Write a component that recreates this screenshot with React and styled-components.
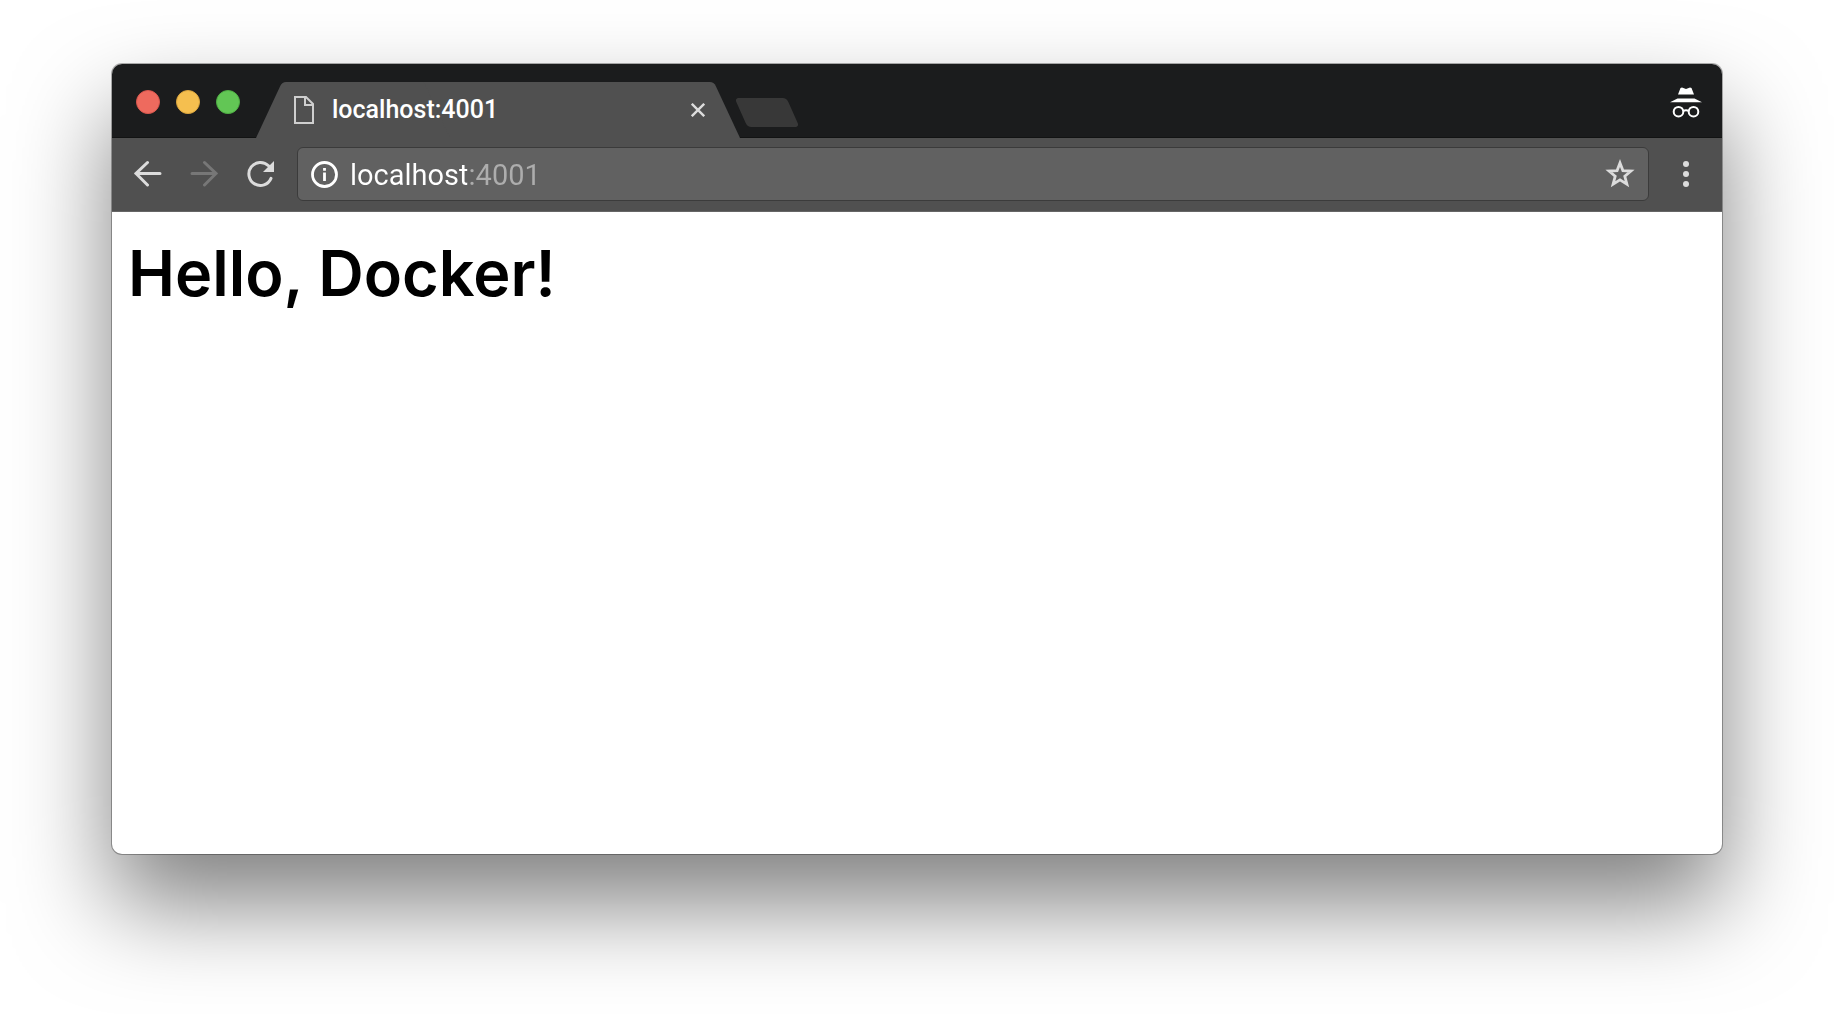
import React from "react";
import styled, { createGlobalStyle } from "styled-components";

const GlobalStyle = createGlobalStyle`
  *, *::before, *::after { box-sizing: border-box; }
  body {
    margin: 0;
    background: #fff;
    font-family: Roboto, "Liberation Sans", sans-serif;
  }
`;

const Desktop = styled.div`
  display: flex;
  min-height: 100vh;
  padding: 64px 112px 160px;
  overflow: hidden;
`;

const BrowserWindow = styled.div`
  flex: 1;
  min-width: 0;
  display: flex;
  flex-direction: column;
  border-radius: 10px;
  background: #fff;
  box-shadow: 0 0 0 1px rgba(0, 0, 0, 0.3), 0 50px 96px rgba(0, 0, 0, 0.5);
`;

const TabStrip = styled.header`
  display: flex;
  align-items: flex-end;
  height: 74px;
  padding: 0 20px 0 24px;
  border-radius: 10px 10px 0 0;
  background: #1b1c1d;
  box-shadow: inset 0 -1px 0 #121313;
`;

const WindowControls = styled.div`
  display: flex;
  gap: 16px;
  margin: 0 16px 24px 0;
`;

const WindowButton = styled.button`
  width: 24px;
  height: 24px;
  padding: 0;
  border: 1px solid ${(p) => p.$edge};
  border-radius: 50%;
  background: ${(p) => p.$fill};
`;

const Tab = styled.div`
  position: relative;
  isolation: isolate;
  flex: 0 1 484px;
  display: flex;
  align-items: center;
  height: 56px;
  padding: 0 35px 0 38px;

  &::before,
  &::after {
    content: "";
    position: absolute;
    z-index: -1;
    top: 0;
    bottom: 0;
    background: #505050;
  }
  &::before {
    left: 0;
    right: 40%;
    border-top-left-radius: 4px;
    transform: skewX(-25deg);
    transform-origin: bottom;
  }
  &::after {
    left: 40%;
    right: 0;
    border-top-right-radius: 4px;
    transform: skewX(25deg);
    transform-origin: bottom;
  }
`;

const TabTitle = styled.span`
  flex: 1;
  margin-left: 18px;
  color: #fff;
  font-size: 25px;
  font-weight: 500;
  line-height: 32px;
`;

const IconButton = styled.button`
  display: flex;
  align-items: center;
  justify-content: center;
  width: ${(p) => p.$size}px;
  height: ${(p) => p.$size}px;
  padding: 0;
  border: 0;
  background: none;
  color: #dcdcdc;

  &:disabled { color: #777; }
  svg { flex: none; display: block; }
`;

const NewTabButton = styled.button`
  width: 52px;
  height: 29px;
  margin: 0 auto 11px 1px;
  padding: 0;
  border: 0;
  border-radius: 4px;
  background: #383838;
  transform: skewX(24deg);
`;

const Incognito = styled.svg`
  flex: none;
  margin-bottom: 20px;
`;

const Toolbar = styled.nav`
  display: flex;
  align-items: center;
  gap: 21px;
  height: 74px;
  padding: 9px 20px 10px;
  border-bottom: 1px solid #666;
  background: #505050;
`;

const NavButtons = styled.div`
  display: flex;
  gap: 24px;
`;

const Omnibox = styled.form`
  flex: 1;
  min-width: 0;
  display: flex;
  align-items: center;
  height: 54px;
  padding: 0 12px 0 10px;
  border: 1px solid #3b3b3b;
  border-radius: 6px;
  background: #616161;
`;

/* The host part is white and the port is dimmed. */
const Address = styled.input`
  flex: 1;
  min-width: 0;
  height: 42px;
  margin-left: 10px;
  padding: 2px 0 0;
  border: 0;
  outline: 0;
  background: linear-gradient(90deg, #fff 117px, #adadad 117px);
  background-clip: text;
  -webkit-background-clip: text;
  color: transparent;
  font: 400 29px/40px Roboto, "Liberation Sans", sans-serif;
`;

const Page = styled.main`
  flex: 1;
  padding: 24px 16px;
`;

const Heading = styled.h1`
  margin: 0;
  color: #000;
  font: 600 63px/74px Inter, "Liberation Sans", Arial, sans-serif;
`;

const stroke = { fill: "none", stroke: "currentColor", strokeWidth: 3 };

const PageIcon = () => (
  <svg width="20" height="28" viewBox="0 0 20 28" fill="none" stroke="#cfcfcf" strokeWidth="2" aria-hidden="true">
    <path d="M1 1H12L19 8V27H1Z" />
    <path d="M11 1V9H19" />
  </svg>
);

const CloseIcon = () => (
  <svg width="14" height="14" viewBox="0 0 14 14" fill="none" stroke="currentColor" strokeWidth="2.4" aria-hidden="true">
    <path d="M.8 .8L13.2 13.2M13.2 .8L.8 13.2" />
  </svg>
);

const ArrowIcon = ({ forward }) => (
  <svg width="28" height="28" viewBox="0 0 28 28" {...stroke} strokeLinecap="round" aria-hidden="true">
    <path d={forward ? "M2 13.5H26M14.5 2.5L26 13.5L14.5 25" : "M26 13.5H2M13.5 2.5L2 13.5L13.5 25"} />
  </svg>
);

const ReloadIcon = () => (
  <svg width="28" height="28" viewBox="0 0 28 28" {...stroke} aria-hidden="true">
    <path d="M22.5 5.8A11.5 11.5 0 1 0 25 18.4" strokeLinecap="round" />
    <path d="M28 1V12H17Z" fill="currentColor" stroke="none" />
  </svg>
);

const InfoIcon = () => (
  <svg width="28" height="28" viewBox="0 0 28 28" fill="none" stroke="#fff" strokeWidth="2.8" aria-hidden="true">
    <circle cx="14.5" cy="14.5" r="12" />
    <path d="M14.5 12.5V21M14.5 8V10.8" />
  </svg>
);

const StarIcon = () => (
  <svg width="30" height="30" viewBox="0 0 30 30" fill="none" stroke="currentColor" strokeWidth="2.8" aria-hidden="true">
    <path d="M15 4L17.9 11.6L26 12L19.8 17.3L21.9 25.2L15 20.8L8.1 25.2L10.2 17.3L4 12L12.1 11.6Z" />
  </svg>
);

const MenuIcon = () => (
  <svg width="6" height="26" viewBox="0 0 6 26" fill="currentColor" aria-hidden="true">
    <circle cx="3" cy="3" r="3" />
    <circle cx="3" cy="13" r="3" />
    <circle cx="3" cy="23" r="3" />
  </svg>
);

const controls = [
  { label: "Close window", fill: "#ee6a5e", edge: "#d9574d" },
  { label: "Minimize window", fill: "#f5bf4f", edge: "#dba53d" },
  { label: "Zoom window", fill: "#62c655", edge: "#4eae43" },
];

export default function App() {
  return (
    <>
      <GlobalStyle />
      <Desktop>
        <BrowserWindow>
          <TabStrip>
            <WindowControls>
              {controls.map((c) => (
                <WindowButton key={c.label} type="button" aria-label={c.label} $fill={c.fill} $edge={c.edge} />
              ))}
            </WindowControls>
            <Tab>
              <PageIcon />
              <TabTitle>localhost:4001</TabTitle>
              <IconButton type="button" aria-label="Close tab" $size={14}>
                <CloseIcon />
              </IconButton>
            </Tab>
            <NewTabButton type="button" aria-label="New tab" />
            <Incognito width="32" height="32" viewBox="0 0 32 32" fill="#fff" role="img" aria-label="Incognito">
              <path d="M10.5 2L12 1.5L16 3L20 1.5L21.5 2L24 8.5H8Z" />
              <path d="M7.5 12.5H24.5L32 16.3H0Z" />
              <g fill="none" stroke="#fff" strokeWidth="2">
                <circle cx="8.5" cy="25.7" r="4.8" />
                <circle cx="23.5" cy="25.7" r="4.8" />
                <path d="M13 25.2Q16 23.5 19 25.2" />
              </g>
            </Incognito>
          </TabStrip>
          <Toolbar aria-label="Browser toolbar">
            <NavButtons>
              <IconButton type="button" aria-label="Back" $size={32}>
                <ArrowIcon />
              </IconButton>
              <IconButton type="button" aria-label="Forward" disabled $size={32}>
                <ArrowIcon forward />
              </IconButton>
              <IconButton type="button" aria-label="Reload" $size={32}>
                <ReloadIcon />
              </IconButton>
            </NavButtons>
            <Omnibox onSubmit={(e) => e.preventDefault()}>
              <IconButton type="button" aria-label="View site information" $size={32}>
                <InfoIcon />
              </IconButton>
              <Address type="text" aria-label="Address" defaultValue="localhost:4001" spellCheck={false} />
              <IconButton type="button" aria-label="Bookmark this page" $size={32}>
                <StarIcon />
              </IconButton>
            </Omnibox>
            <IconButton type="button" aria-label="Menu" $size={32}>
              <MenuIcon />
            </IconButton>
          </Toolbar>
          <Page>
            <Heading>Hello, Docker!</Heading>
          </Page>
        </BrowserWindow>
      </Desktop>
    </>
  );
}
